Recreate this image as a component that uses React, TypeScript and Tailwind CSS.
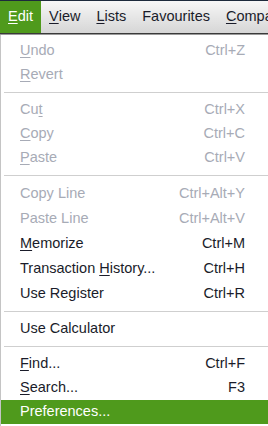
import React from 'react';

type Item =
  | { type: 'sep' }
  | { type: 'item'; label: string; mnemonic?: number; shortcut?: string; disabled?: boolean; active?: boolean; tall?: boolean };

const items: Item[] = [
  { type: 'item', label: 'Undo', mnemonic: 0, shortcut: 'Ctrl+Z', disabled: true },
  { type: 'item', label: 'Revert', mnemonic: 0, disabled: true },
  { type: 'sep' },
  { type: 'item', label: 'Cut', mnemonic: 2, shortcut: 'Ctrl+X', disabled: true },
  { type: 'item', label: 'Copy', mnemonic: 0, shortcut: 'Ctrl+C', disabled: true },
  { type: 'item', label: 'Paste', mnemonic: 0, shortcut: 'Ctrl+V', disabled: true },
  { type: 'sep' },
  { type: 'item', label: 'Copy Line', shortcut: 'Ctrl+Alt+Y', disabled: true, tall: true },
  { type: 'item', label: 'Paste Line', shortcut: 'Ctrl+Alt+V', disabled: true, tall: true },
  { type: 'item', label: 'Memorize', mnemonic: 0, shortcut: 'Ctrl+M', tall: true },
  { type: 'item', label: 'Transaction History...', mnemonic: 12, shortcut: 'Ctrl+H', tall: true },
  { type: 'item', label: 'Use Register', shortcut: 'Ctrl+R', tall: true },
  { type: 'sep' },
  { type: 'item', label: 'Use Calculator' },
  { type: 'sep' },
  { type: 'item', label: 'Find...', mnemonic: 0, shortcut: 'Ctrl+F' },
  { type: 'item', label: 'Search...', mnemonic: 0, shortcut: 'F3' },
  { type: 'item', label: 'Preferences...', active: true },
];

function Label({ text, mnemonic }: { text: string; mnemonic?: number }) {
  if (mnemonic === undefined) return <>{text}</>;
  return (
    <>
      {text.slice(0, mnemonic)}
      <span className="underline underline-offset-2">{text[mnemonic]}</span>
      {text.slice(mnemonic + 1)}
    </>
  );
}

const bar: { label: string; mnemonic?: number; active?: boolean }[] = [
  { label: 'Edit', mnemonic: 0, active: true },
  { label: 'View', mnemonic: 0 },
  { label: 'Lists', mnemonic: 0 },
  { label: 'Favourites' },
  { label: 'Company', mnemonic: 0 },
];

export default function App() {
  return (
    <div
      className="w-[268px] h-[426px] overflow-hidden bg-white text-[14.5px]"
      style={{ fontFamily: '"Liberation Sans", Arial, sans-serif' }}
    >
      <div className="h-px bg-[#1d2a3c]" />
      <div className="flex h-[32px] bg-gradient-to-b from-[#f7f7f7] to-[#d6d6d6] whitespace-nowrap">
        {bar.map((b) => (
          <div
            key={b.label}
            className={`flex items-center px-2 ${b.active ? 'bg-[#4f9a1c] text-white' : 'text-[#1a1c2a]'}`}
          >
            <Label text={b.label} mnemonic={b.mnemonic} />
          </div>
        ))}
      </div>
      <div className="h-px bg-[#3a3a3a]" />
      <div className="h-px bg-[#9a9a9a]" />
      <div className="border-l border-[#c4c4c4] pt-1 h-[391px]">
        {items.map((it, i) =>
          it.type === 'sep' ? (
            <div key={i} className="h-[11px] flex items-center pl-[3px]">
              <div className="h-px w-full bg-[#cfcfcf]" />
            </div>
          ) : (
            <div
              key={i}
              className={`flex items-center justify-between pl-[19px] pr-[23px] whitespace-nowrap ${
                it.tall ? 'h-[25px]' : 'h-[24px]'
              } ${it.active ? 'bg-[#4f9a1c] text-white' : it.disabled ? 'text-[#a7abb6]' : 'text-[#1a1c2a]'}`}
            >
              <span>
                <Label text={it.label} mnemonic={it.mnemonic} />
              </span>
              {it.shortcut && <span>{it.shortcut}</span>}
            </div>
          )
        )}
      </div>
    </div>
  );
}
